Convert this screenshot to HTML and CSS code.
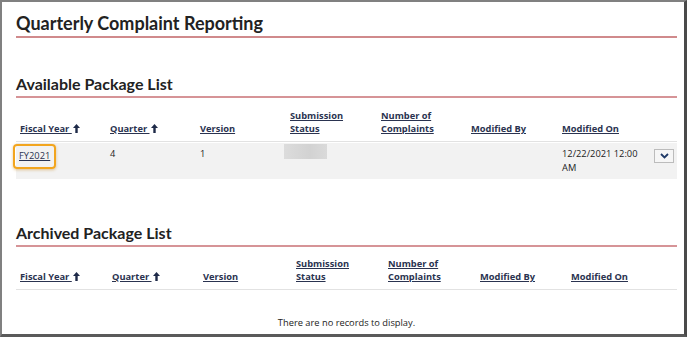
FILE: index.html
```html
<!DOCTYPE html>
<html>
<head>
<meta charset="utf-8">
<link rel="stylesheet" href="styles.css">
</head>
<body>
<div class="frame">
  <h1 class="title">Quarterly Complaint Reporting</h1>

  <h2 class="section">Available Package List</h2>
  <div class="grid grid-a">
    <div class="hrow">
      <a class="th">Fiscal Year <svg class="arrow" width="7" height="9" viewBox="0 0 7 9"><path d="M3.5 0 L7 4 L4.7 4 L4.7 9 L2.3 9 L2.3 4 L0 4 Z" fill="#1e2a48"/></svg></a>
      <a class="th">Quarter <svg class="arrow" width="7" height="9" viewBox="0 0 7 9"><path d="M3.5 0 L7 4 L4.7 4 L4.7 9 L2.3 9 L2.3 4 L0 4 Z" fill="#1e2a48"/></svg></a>
      <a class="th">Version</a>
      <a class="th">Submission<br>Status</a>
      <a class="th">Number of<br>Complaints</a>
      <a class="th">Modified By</a>
      <a class="th">Modified On</a>
      <span></span>
    </div>
    <div class="drow">
      <span class="td"><span class="focus"><a class="fy">FY2021</a></span></span>
      <span class="td">4</span>
      <span class="td">1</span>
      <span class="td"><span class="blur"></span></span>
      <span class="td"></span>
      <span class="td"></span>
      <span class="td">12/22/2021 12:00<br>AM</span>
      <span class="td"><button class="dd"><svg width="9" height="6" viewBox="0 0 9 6"><path d="M1 1 L4.5 4.5 L8 1" fill="none" stroke="#1f3a68" stroke-width="1.8"/></svg></button></span>
    </div>
  </div>

  <h2 class="section archived">Archived Package List</h2>
  <div class="grid grid-b">
    <div class="hrow">
      <a class="th">Fiscal Year <svg class="arrow" width="7" height="9" viewBox="0 0 7 9"><path d="M3.5 0 L7 4 L4.7 4 L4.7 9 L2.3 9 L2.3 4 L0 4 Z" fill="#1e2a48"/></svg></a>
      <a class="th">Quarter <svg class="arrow" width="7" height="9" viewBox="0 0 7 9"><path d="M3.5 0 L7 4 L4.7 4 L4.7 9 L2.3 9 L2.3 4 L0 4 Z" fill="#1e2a48"/></svg></a>
      <a class="th">Version</a>
      <a class="th">Submission<br>Status</a>
      <a class="th">Number of<br>Complaints</a>
      <a class="th">Modified By</a>
      <a class="th">Modified On</a>
    </div>
    <div class="empty">There are no records to display.</div>
  </div>
</div>
</body>
</html>
```
FILE: styles.css
```css
html, body { margin: 0; padding: 0; background: #fff; }
.frame {
  box-sizing: border-box;
  width: 687px;
  height: 337px;
  border-top: 2px solid #808080;
  border-left: 2px solid #808080;
  border-right: 3px solid #4a4a4a;
  border-bottom: 3px solid #5a5a5a;
  padding: 0 7px 0 14px;
  font-family: "Open Sans", sans-serif;
  color: #222;
  overflow: hidden;
}
.title {
  font-family: Lato, sans-serif;
  font-weight: 700;
  font-size: 18px;
  margin: 10px 0 0;
  padding-bottom: 2px;
  line-height: 22px;
  border-bottom: 2px solid #d08a8c;
}
.section {
  font-family: Lato, sans-serif;
  font-weight: 700;
  font-size: 16px;
  margin: 36px 0 0;
  line-height: 20px;
  padding-bottom: 2px;
  border-bottom: 2px solid #d69497;
}
.section.archived { margin-top: 44px; }
.grid { font-size: 9.3px; }
.hrow, .drow {
  display: grid;
  grid-template-columns: 90px 90px 90px 91px 90px 91px 90px 1fr;
}
.grid-b .hrow { grid-template-columns: 92px 91px 93px 92px 92px 91px 1fr; height: 43px; }
.hrow {
  align-items: end;
  height: 44px;
  box-sizing: border-box;
  padding: 0 0 6px 4px;
  border-bottom: 1px solid #e2e2e2;
}
.th {
  font-weight: 700;
  color: #2a3350;
  text-decoration: underline;
  line-height: 13px;
}
.arrow { vertical-align: -1px; margin-left: 1px; }
.drow {
  background: #f2f2f2;
  height: 36px;
  padding-left: 4px;
  padding-top: 4px;
  box-sizing: border-box;
  margin-top: 1px;
}
.td { line-height: 14px; }
.focus {
  display: inline-block;
  margin: -3px 0 0 -7px;
  padding: 3px 4px 4px;
  border: 2px solid #f2a51e;
  border-radius: 4px;
  box-shadow: 0 1px 3px rgba(200,130,20,0.45);
  line-height: 14px;
}
.fy {
  color: #2a3350;
  text-decoration: underline;
}
.blur {
  display: inline-block;
  width: 43px;
  height: 15px;
  margin-left: -6px;
  margin-top: -3px;
  background: linear-gradient(90deg, #dcdcdc, #d2d2d2 60%, #dadada);
}
.dd {
  margin-left: 2px;
  width: 20px;
  height: 14px;
  padding: 0;
  border: 1px solid #bcbcbc;
  background: #f6f6f6;
  display: flex;
  align-items: center;
  justify-content: center;
  margin-top: 2px;
}
.empty {
  text-align: center;
  padding-top: 26px;
  font-size: 9.3px;
}
```
